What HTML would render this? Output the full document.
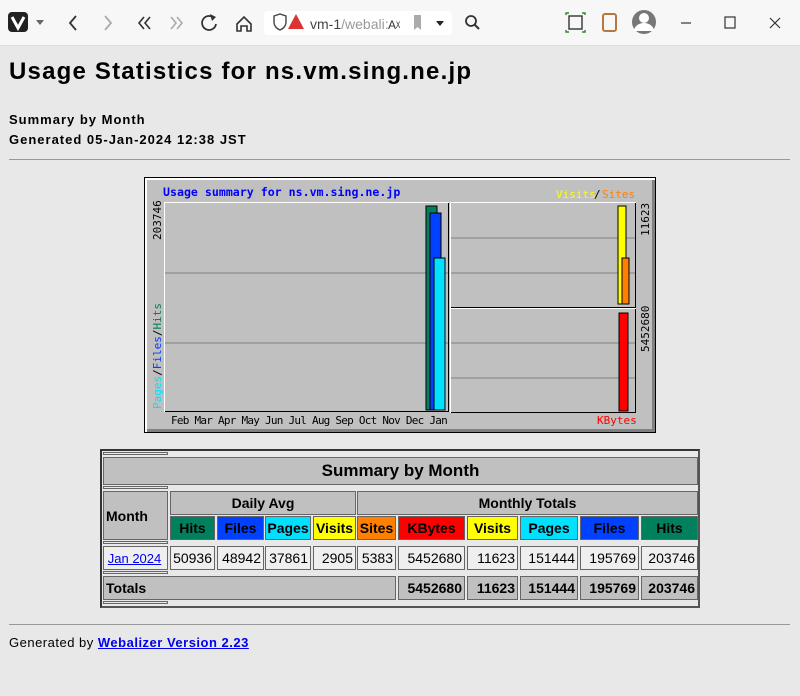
<!DOCTYPE html>
<html><head><meta charset="utf-8"><style>
*{margin:0;padding:0;box-sizing:border-box}
body{width:800px;height:696px;overflow:hidden;background:#e8e8e8;font-family:"Liberation Sans",sans-serif;position:relative;color:#000}
.a{position:absolute}
.bar{left:0;top:0;width:800px;height:46px;background:#f7f7f7;border-bottom:1px solid #ddd}
.c{position:absolute;display:flex;align-items:center;justify-content:center;font-weight:bold;font-size:14px;border:1px solid #666}
.g{background:#c0c0c0}
.mono{font-family:"DejaVu Sans Mono","Liberation Mono",monospace}
.td{background:#efefef;font-weight:normal;justify-content:flex-end;padding-right:2px}
</style></head><body>
<div class="a bar"></div>
<svg class="a" style="left:0;top:0" width="800" height="46">
<rect x="8" y="12" width="20" height="20" rx="4" fill="#222"/><path d="M12 17 L18 28 L24 17" stroke="#fff" stroke-width="3" fill="none"/>
<path d="M36 20 l4 5 l4 -5z" fill="#666"/>
<path d="M76 16 l-6 7 l6 7" stroke="#333" stroke-width="1.8" fill="none"/>
<path d="M105 16 l6 7 l-6 7" stroke="#aaa" stroke-width="1.8" fill="none"/>
<path d="M144 17 l-5 6 l5 6 M150 17 l-5 6 l5 6" stroke="#333" stroke-width="1.6" fill="none"/>
<path d="M171 17 l5 6 l-5 6 M177 17 l5 6 l-5 6" stroke="#aaa" stroke-width="1.6" fill="none"/>
<path d="M214 18 a7 7 0 1 0 2 6" stroke="#333" stroke-width="1.8" fill="none"/><path d="M210 14 l6 3 l-4 4z" fill="#333"/>
<path d="M237 24 l7 -7 l7 7 v7 h-4 v-5 h-6 v5 h-4z" stroke="#333" stroke-width="1.6" fill="none"/>
<rect x="264" y="11" width="188" height="24" rx="4" fill="#fff"/>
<path d="M274 16 l6 -2 l6 2 v6 c0 4 -3 7 -6 8 c-3 -1 -6 -4 -6 -8z" stroke="#444" stroke-width="1.4" fill="none"/>
<path d="M296 14 l8 15 h-16z" fill="#d33"/>
<text x="310" y="29" font-size="14" fill="#444" font-family="Liberation Sans">vm-1<tspan fill="#999">/webali:</tspan></text>
<text x="388" y="29" font-size="12" fill="#333" font-family="Liberation Sans">Aᵡ</text>
<path d="M414 15 h7 v15 l-3.5 -3 l-3.5 3z" fill="#aaa"/>
<path d="M436 21 l4 5 l4 -5z" fill="#222"/>
<circle cx="471" cy="21" r="5" stroke="#333" stroke-width="1.8" fill="none"/><path d="M475 25 l4 4" stroke="#333" stroke-width="2"/>
<rect x="569" y="16" width="13" height="13" stroke="#333" stroke-width="1.4" fill="none"/><path d="M566 15 v-2 h3 M585 15 v-2 h-3 M566 30 v2 h3 M585 30 v2 h-3" stroke="#2a8a2a" stroke-width="1.4" fill="none"/>
<rect x="603" y="14" width="13" height="17" rx="2" stroke="#b8773c" stroke-width="2" fill="none"/>
<circle cx="644" cy="22" r="12" fill="#777"/><circle cx="644" cy="18" r="5" fill="#fff"/><path d="M634 31 a10 8 0 0 1 20 0z" fill="#fff"/>
<path d="M681 23 h10" stroke="#333" stroke-width="1.2"/>
<rect x="725" y="17" width="10" height="11" stroke="#333" stroke-width="1.2" fill="none"/>
<path d="M770 18 l10 10 M780 18 l-10 10" stroke="#333" stroke-width="1.2"/>
</svg>
<div class="a" style="left:9px;top:58px;font-size:24px;font-weight:bold;letter-spacing:1.2px">Usage Statistics for ns.vm.sing.ne.jp</div>
<div class="a" style="left:9px;top:110px;font-size:13px;font-weight:bold;line-height:20px;letter-spacing:1px">Summary by Month<br>Generated 05-Jan-2024 12:38 JST</div>
<div class="a" style="left:9px;top:159px;width:781px;height:1px;background:#999"></div>

<svg class="a mono" style="left:144px;top:177px" width="512" height="256" font-family="DejaVu Sans Mono,monospace">
<rect x="0" y="0" width="512" height="256" fill="#000"/>
<rect x="1" y="1" width="510" height="254" fill="#fff"/>
<rect x="3" y="3" width="508" height="252" fill="#808080"/>
<rect x="3" y="3" width="505" height="249" fill="#c0c0c0"/>
<text x="19" y="19" font-size="11.6" font-weight="bold" fill="#0000ff">Usage summary for ns.vm.sing.ne.jp</text>
<text x="412" y="21" font-size="11" fill="#ffff00">Visits</text><text x="450" y="21" font-size="11">/</text><text x="458" y="21" font-size="11" fill="#ff8000">Sites</text>
<rect x="20" y="25" width="285" height="210" fill="#fff"/><rect x="21" y="26" width="284" height="209" fill="#000"/><rect x="21" y="26" width="283" height="208" fill="#c0c0c0"/>
<path d="M21 96h283M21 166h283" stroke="#808080"/>
<rect x="282" y="29" width="11" height="204" fill="#00805c" stroke="#000"/>
<rect x="286" y="36" width="11" height="197" fill="#0040ff" stroke="#000"/>
<rect x="290" y="81" width="11" height="152" fill="#00e0ff" stroke="#000"/>
<rect x="306" y="25" width="186" height="106" fill="#fff"/><rect x="307" y="26" width="185" height="105" fill="#000"/><rect x="307" y="26" width="184" height="104" fill="#c0c0c0"/>
<path d="M307 61h184M307 96h184" stroke="#808080"/>
<rect x="474" y="29" width="8" height="98" fill="#ffff00" stroke="#000"/>
<rect x="478" y="81" width="7" height="46" fill="#ff8000" stroke="#000"/>
<rect x="306" y="131" width="186" height="105" fill="#fff"/><rect x="307" y="132" width="185" height="104" fill="#000"/><rect x="307" y="132" width="184" height="103" fill="#c0c0c0"/>
<path d="M307 166h184M307 201h184" stroke="#808080"/>
<rect x="475" y="136" width="9" height="98" fill="#ff0000" stroke="#000"/>
<text font-size="11" transform="translate(17,63) rotate(-90)">203746</text>
<text font-size="11" transform="translate(17,232) rotate(-90)"><tspan fill="#00e0ff">Pages</tspan>/<tspan fill="#0040ff">Files</tspan>/<tspan fill="#00805c">Hits</tspan></text>
<text font-size="11" transform="translate(505,59) rotate(-90)">11623</text>
<text font-size="11" transform="translate(505,175) rotate(-90)">5452680</text>
<text x="27" y="247" font-size="11" letter-spacing="-0.75">Feb Mar Apr May Jun Jul Aug Sep Oct Nov Dec Jan</text>
<text x="453" y="247" font-size="11" fill="#ff0000">KBytes</text>
</svg>

<div class="a" style="left:100px;top:449px;width:600px;height:159px;border:2px solid #333;border-right-color:#555;border-bottom-color:#555"></div>
<div class="a" style="left:103px;top:452px;width:65px;height:3px;border:1px solid #666"></div>
<div class="a" style="left:103px;top:486px;width:65px;height:3px;border:1px solid #666"></div>
<div class="a" style="left:103px;top:541px;width:65px;height:3px;border:1px solid #666"></div>
<div class="a" style="left:103px;top:571px;width:65px;height:3px;border:1px solid #666"></div>
<div class="a" style="left:103px;top:601px;width:65px;height:3px;border:1px solid #666"></div>
<div class="c g" style="left:103px;top:457px;width:595px;height:28px;font-size:17px">Summary by Month</div>
<div class="c g" style="left:103px;top:491px;width:65px;height:49px;justify-content:flex-start;padding-left:2px">Month</div>
<div class="c g" style="left:170px;top:491px;width:186px;height:24px">Daily Avg</div>
<div class="c g" style="left:357px;top:491px;width:341px;height:24px">Monthly Totals</div>
<div class="c" style="left:170px;top:516px;width:45px;height:24px;background:#00805c">Hits</div>
<div class="c" style="left:217px;top:516px;width:47px;height:24px;background:#0040ff">Files</div>
<div class="c" style="left:265px;top:516px;width:46px;height:24px;background:#00e0ff">Pages</div>
<div class="c" style="left:313px;top:516px;width:43px;height:24px;background:#ffff00">Visits</div>
<div class="c" style="left:357px;top:516px;width:39px;height:24px;background:#ff8000">Sites</div>
<div class="c" style="left:398px;top:516px;width:67px;height:24px;background:#ff0000">KBytes</div>
<div class="c" style="left:467px;top:516px;width:51px;height:24px;background:#ffff00">Visits</div>
<div class="c" style="left:520px;top:516px;width:58px;height:24px;background:#00e0ff">Pages</div>
<div class="c" style="left:580px;top:516px;width:59px;height:24px;background:#0040ff">Files</div>
<div class="c" style="left:641px;top:516px;width:57px;height:24px;background:#00805c">Hits</div>
<div class="c td" style="left:103px;top:546px;width:65px;height:24px;justify-content:center"><a href="#" style="color:#00e;font-size:13px">Jan 2024</a></div>
<div class="c td" style="left:170px;top:546px;width:45px;height:24px">50936</div>
<div class="c td" style="left:217px;top:546px;width:47px;height:24px">48942</div>
<div class="c td" style="left:265px;top:546px;width:46px;height:24px">37861</div>
<div class="c td" style="left:313px;top:546px;width:43px;height:24px">2905</div>
<div class="c td" style="left:357px;top:546px;width:39px;height:24px">5383</div>
<div class="c td" style="left:398px;top:546px;width:67px;height:24px">5452680</div>
<div class="c td" style="left:467px;top:546px;width:51px;height:24px">11623</div>
<div class="c td" style="left:520px;top:546px;width:58px;height:24px">151444</div>
<div class="c td" style="left:580px;top:546px;width:59px;height:24px">195769</div>
<div class="c td" style="left:641px;top:546px;width:57px;height:24px">203746</div>
<div class="c g" style="left:103px;top:576px;width:293px;height:24px;justify-content:flex-start;padding-left:2px">Totals</div>
<div class="c g" style="left:398px;top:576px;width:67px;height:24px;justify-content:flex-end;padding-right:2px">5452680</div>
<div class="c g" style="left:467px;top:576px;width:51px;height:24px;justify-content:flex-end;padding-right:2px">11623</div>
<div class="c g" style="left:520px;top:576px;width:58px;height:24px;justify-content:flex-end;padding-right:2px">151444</div>
<div class="c g" style="left:580px;top:576px;width:59px;height:24px;justify-content:flex-end;padding-right:2px">195769</div>
<div class="c g" style="left:641px;top:576px;width:57px;height:24px;justify-content:flex-end;padding-right:2px">203746</div>

<div class="a" style="left:9px;top:624px;width:781px;height:1px;background:#999"></div>
<div class="a" style="left:9px;top:635px;font-size:13px;letter-spacing:0.5px">Generated by <a href="#" style="color:#00e;font-weight:bold">Webalizer Version 2.23</a></div>
</body></html>
